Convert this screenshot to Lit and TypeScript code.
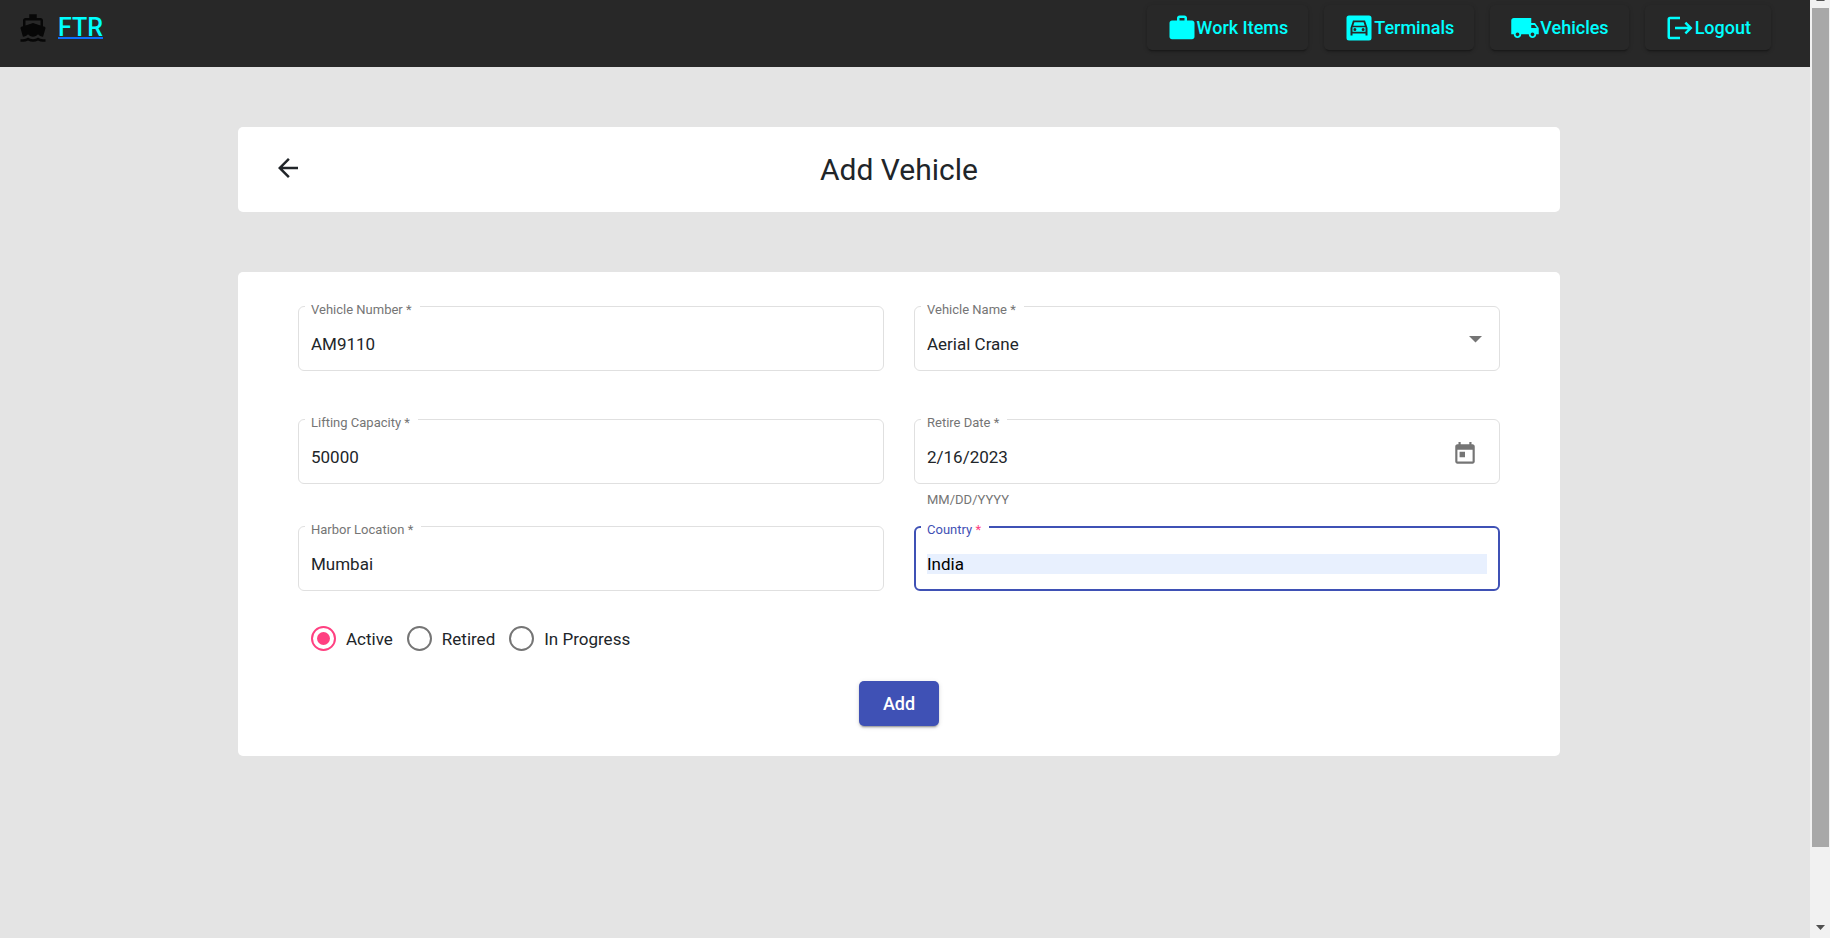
import { LitElement, html, css, svg, type TemplateResult } from "lit";
import { customElement, state } from "lit/decorators.js";
import { classMap } from "lit/directives/class-map.js";

const ICONS = {
  boat: "M20 21c-1.39 0-2.78-.47-4-1.32-2.44 1.71-5.56 1.71-8 0C6.78 20.53 5.39 21 4 21H2v2h2c1.38 0 2.74-.35 4-.99 2.52 1.29 5.48 1.29 8 0 1.26.65 2.62.99 4 .99h2v-2h-2zM3.95 19H4c1.6 0 3.02-.88 4-2 .98 1.12 2.4 2 4 2s3.02-.88 4-2c.98 1.12 2.4 2 4 2h.05l1.89-6.68c.08-.26.06-.54-.06-.78s-.34-.42-.6-.5L20 10.62V6c0-1.1-.9-2-2-2h-3V1H9v3H6c-1.1 0-2 .9-2 2v4.62l-1.29.42c-.26.08-.48.26-.6.5s-.15.52-.06.78L3.95 19zM6 6h12v3.97L12 8 6 9.97V6z",
  work: "M20 6h-4V4c0-1.11-.89-2-2-2h-4c-1.11 0-2 .89-2 2v2H4c-1.11 0-1.99.89-1.99 2L2 19c0 1.11.89 2 2 2h16c1.11 0 2-.89 2-2V8c0-1.11-.89-2-2-2zm-6 0h-4V4h4v2z",
  truck: "M20 8h-3V4H3c-1.1 0-2 .9-2 2v11h2c0 1.66 1.34 3 3 3s3-1.34 3-3h6c0 1.66 1.34 3 3 3s3-1.34 3-3h2v-5l-3-4zM6 18.500c-.83 0-1.500-.67-1.500-1.500s.67-1.500 1.500-1.500 1.500.67 1.500 1.500-.67 1.500-1.500 1.500zm13.500-9l1.960 2.500H17V9.500h2.500zm-1.500 9c-.83 0-1.500-.67-1.500-1.500s.67-1.500 1.500-1.500 1.500.67 1.500 1.500-.67 1.500-1.500 1.500z",
  back: "M20 11H7.830l5.590-5.590L12 4l-8 8 8 8 1.410-1.410L7.830 13H20v-2z",
  today: "M19 3h-1V1h-2v2H8V1H6v2H5c-1.110 0-1.990.9-1.990 2L3 19c0 1.100.89 2 2 2h14c1.100 0 2-.9 2-2V5c0-1.100-.9-2-2-2zm0 16H5V8h14v11zM7 10h5v5H7z",
  logout: "M2 5Q2 3 4 3H12V5H4V19H12V21H4Q2 21 2 19zM17 7L22 12L17 17L15.600 15.600L18.200 13H8V11H18.200L15.600 8.400z",
  terminal: "M4 2H20Q22 2 22 4V20Q22 22 20 22H4Q2 22 2 20V4Q2 2 4 2zM7.200 6L5.200 12V18H6.800V16.300H17.200V18H18.800V12L16.800 6zM8.300 7.300H15.700L16.600 10.200H7.400zM6.800 11.300H17.200V15H6.800zM8.700 12A1.200 1.200 0 1 0 8.700 14.400A1.200 1.200 0 1 0 8.700 12zM15.300 12A1.200 1.200 0 1 0 15.300 14.400A1.200 1.200 0 1 0 15.300 12z",
};

const icon = (name: keyof typeof ICONS, cls = "icon") => html`
  <svg class=${cls} viewBox="0 0 24 24" aria-hidden="true">
    ${svg`<path fill="currentColor" fill-rule="evenodd" d=${ICONS[name]}></path>`}
  </svg>`;

const NAV: { label: string; icon: keyof typeof ICONS }[] = [
  { label: "Work Items", icon: "work" },
  { label: "Terminals", icon: "terminal" },
  { label: "Vehicles", icon: "truck" },
  { label: "Logout", icon: "logout" },
];

@customElement("app-root")
export class AppRoot extends LitElement {
  static styles = css`
    :host {
      display: flex;
      min-height: 100vh;
      background: #e4e4e4;
      color: #212529;
      font-family: Roboto, "Liberation Sans", sans-serif;
      font-size: 17px;
      line-height: 20px;
    }
    *, *::before { box-sizing: border-box; }
    input, select, button { font: inherit; color: inherit; margin: 0; }
    .page { flex: 1; min-width: 0; }
    .bar {
      display: flex;
      justify-content: space-between;
      align-items: flex-start;
      height: 67px;
      padding: 5px 39px 0 18px;
      background: #282828;
    }
    .brand { display: flex; align-items: center; gap: 10px; height: 45px; }
    .boat { width: 30px; height: 30px; color: #070707; }
    .brand-link {
      color: #0d6efd;
      font-size: 25px;
      font-weight: 500;
      line-height: 30px;
      text-decoration: underline;
      text-decoration-thickness: 2px;
    }
    .brand-name { color: #00ffff; }
    .nav { display: flex; gap: 16px; }
    .btn {
      display: flex;
      align-items: center;
      height: 45px;
      padding: 0 20px;
      border: 0;
      border-radius: 5px;
      font-size: 18px;
      font-weight: 500;
      cursor: pointer;
      box-shadow: 0 3px 1px -2px rgba(0, 0, 0, 0.2), 0 2px 2px rgba(0, 0, 0, 0.14), 0 1px 5px rgba(0, 0, 0, 0.12);
    }
    .nav-btn { background: #282828; color: #00ffff; }
    .icon { width: 30px; height: 30px; flex: none; display: block; }
    .content {
      display: flex;
      flex-direction: column;
      gap: 60px;
      padding: 60px 250px 60px 238px;
    }
    .card { background: #fff; border-radius: 5px; }
    .heading {
      display: grid;
      grid-template-columns: 30px 1fr 30px;
      align-items: start;
      padding: 26px 35px 25px;
    }
    .icon-btn { border: 0; padding: 0; background: none; cursor: pointer; }
    .title { margin: 0; font-size: 30px; font-weight: 400; line-height: 34px; text-align: center; }
    .form { padding: 34px 60px 30px; }
    .grid { display: grid; grid-template-columns: 1fr 1fr; column-gap: 30px; }
    .cell { min-height: 107px; }
    .cell.tall { min-height: 113px; }
    .cell.last { min-height: 100px; }
    .field {
      position: relative;
      display: flex;
      height: 65px;
      border: 1px solid #e0e0e0;
      border-radius: 6px;
    }
    .label {
      position: absolute;
      top: -5px;
      left: 6px;
      padding: 0 8px 0 6px;
      background: #fff;
      color: #757575;
      font-size: 13px;
      line-height: 16px;
    }
    .control {
      flex: 1;
      min-width: 0;
      height: 20px;
      margin: 27px 12px 0;
      padding: 0;
      border: 0;
      outline: 0;
      background: transparent;
      appearance: none;
    }
    .field.active { border: 2px solid #3f51b5; }
    .field.active .label { top: -6px; left: 5px; color: #3f51b5; }
    .field.active .star { color: #ff4081; }
    .field.active .control { margin: 26px 11px 0; background: #e8f0fe; color: #000; }
    .caret {
      position: absolute;
      top: 29px;
      right: 17px;
      width: 13px;
      height: 7px;
      color: #757575;
      pointer-events: none;
    }
    .picker { align-self: center; padding-top: 4px; margin-right: 21px; color: #757575; }
    .today { width: 26px; height: 26px; display: block; }
    .hint { padding: 8px 13px 0; color: #757575; font-size: 13px; line-height: 16px; }
    .radios { display: flex; gap: 14px; padding: 0 13px; margin: 0; border: 0; }
    .radio { display: flex; align-items: center; gap: 10px; }
    .dot {
      appearance: none;
      display: grid;
      place-items: center;
      width: 25px;
      height: 25px;
      border: 2px solid #757575;
      border-radius: 50%;
    }
    .dot:checked { border-color: #ff4081; }
    .dot:checked::before {
      content: "";
      width: 13px;
      height: 13px;
      border-radius: 50%;
      background: #ff4081;
    }
    .actions { display: flex; justify-content: center; padding-top: 30px; }
    .add { background: #3f51b5; color: #fff; padding: 0 24px; }
    .scroll {
      display: flex;
      flex-direction: column;
      width: 20px;
      height: 100vh;
      padding: 0 1px 0 2px;
      background: #f1f1f1;
    }
    .scroll-arrow { width: 9px; height: 5px; display: block; margin: 0 4px; color: #505050; }
    .scroll-top { height: 8px; overflow: hidden; }
    .scroll-up { margin-top: -4px; }
    .thumb { flex: 839; background: #a8a8a8; }
    .track { flex: 78; }
    .scroll-end { height: 13px; }
  `;

  @state() private status = "Active";

  private field(id: string, label: string, control: TemplateResult, active = false) {
    return html`
      <div class=${classMap({ field: true, active })}>
        <label class="label" for=${id}>${label} <span class="star">*</span></label>
        ${control}
      </div>`;
  }

  private text(id: string, value: string) {
    return html`<input class="control" id=${id} type="text" .value=${value} required />`;
  }

  render() {
    return html`
      <div class="page">
        <header class="bar">
          <div class="brand">
            ${icon("boat", "boat")}
            <a class="brand-link" href="#"><span class="brand-name">FTR</span></a>
          </div>
          <nav class="nav">
            ${NAV.map((n) => html`<button class="btn nav-btn" type="button">${icon(n.icon)}<span>${n.label}</span></button>`)}
          </nav>
        </header>
        <main class="content">
          <section class="card heading">
            <button class="icon-btn" type="button" aria-label="Back">${icon("back")}</button>
            <h1 class="title">Add Vehicle</h1>
          </section>
          <form class="card form" @submit=${(e: Event) => e.preventDefault()}>
            <div class="grid">
              <div class="cell tall">${this.field("number", "Vehicle Number", this.text("number", "AM9110"))}</div>
              <div class="cell tall">
                ${this.field("name", "Vehicle Name", html`
                  <select class="control" id="name"><option>Aerial Crane</option></select>
                  <svg class="caret" viewBox="0 0 13 7" aria-hidden="true"><path fill="currentColor" d="M0 0H13L6.500 6.500z"></path></svg>`)}
              </div>
              <div class="cell">${this.field("capacity", "Lifting Capacity", this.text("capacity", "50000"))}</div>
              <div class="cell">
                ${this.field("retire", "Retire Date", html`
                  ${this.text("retire", "2/16/2023")}
                  <button class="icon-btn picker" type="button" aria-label="Open calendar">${icon("today", "today")}</button>`)}
                <div class="hint">MM/DD/YYYY</div>
              </div>
              <div class="cell last">${this.field("harbor", "Harbor Location", this.text("harbor", "Mumbai"))}</div>
              <div class="cell last">${this.field("country", "Country", this.text("country", "India"), true)}</div>
            </div>
            <fieldset class="radios" aria-label="Status">
              ${["Active", "Retired", "In Progress"].map((s) => html`
                <label class="radio">
                  <input class="dot" type="radio" name="status" .checked=${this.status === s} @change=${() => (this.status = s)} />
                  <span>${s}</span>
                </label>`)}
            </fieldset>
            <div class="actions"><button class="btn add" type="submit">Add</button></div>
          </form>
        </main>
      </div>
      <div class="scroll" aria-hidden="true">
        <div class="scroll-top"><svg class="scroll-arrow scroll-up" viewBox="0 0 9 5"><path fill="currentColor" d="M0 5H9L4.500 0z"></path></svg></div>
        <div class="thumb"></div>
        <div class="track"></div>
        <div class="scroll-end"><svg class="scroll-arrow" viewBox="0 0 9 5"><path fill="currentColor" d="M0 0H9L4.500 5z"></path></svg></div>
      </div>`;
  }
}
